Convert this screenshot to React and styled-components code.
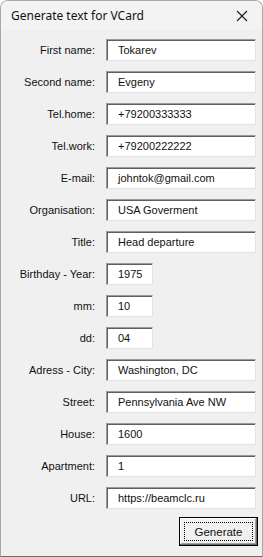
import styled, { createGlobalStyle } from "styled-components";

const fields = [
  { label: "First name:", value: "Tokarev" },
  { label: "Second name:", value: "Evgeny" },
  { label: "Tel.home:", value: "+79200333333" },
  { label: "Tel.work:", value: "+79200222222" },
  { label: "E-mail:", value: "johntok@gmail.com" },
  { label: "Organisation:", value: "USA Goverment" },
  { label: "Title:", value: "Head departure" },
  { label: "Birthday - Year:", value: "1975", short: true },
  { label: "mm:", value: "10", short: true },
  { label: "dd:", value: "04", short: true },
  { label: "Adress - City:", value: "Washington, DC" },
  { label: "Street:", value: "Pennsylvania Ave NW" },
  { label: "House:", value: "1600" },
  { label: "Apartment:", value: "1" },
  { label: "URL:", value: "https://beamclc.ru" },
];

function App() {
  return (
    <>
      <GlobalStyle />
      <Window>
        <TitleBar>
          <Title>Generate text for VCard</Title>
          <CloseButton aria-label="Close">
            <svg width="12" height="12" viewBox="0 0 12 12">
              <path d="M1 1L11 11M11 1L1 11" stroke="#1a1a1a" strokeWidth="1.1" fill="none" />
            </svg>
          </CloseButton>
        </TitleBar>
        <Body>
          <Form>
            {fields.map((f) => (
              <Row key={f.label}>
                <Label>{f.label}</Label>
                <Field $short={f.short}>{f.value}</Field>
              </Row>
            ))}
          </Form>
          <Footer>
            <GenerateButton>
              <FocusRing>Generate</FocusRing>
            </GenerateButton>
          </Footer>
        </Body>
      </Window>
    </>
  );
}

const GlobalStyle = createGlobalStyle`
  html, body {
    margin: 0;
    padding: 0;
    background: #ffffff;
  }
  * {
    box-sizing: border-box;
  }
`;

const Window = styled.div`
  width: 263px;
  height: 557px;
  display: flex;
  flex-direction: column;
  border: 1px solid #a8a8a8;
  border-bottom-color: #6e6e6e;
  border-radius: 8px 8px 0 0;
  overflow: hidden;
  font-family: "Liberation Sans", Arial, sans-serif;
`;

const TitleBar = styled.div`
  height: 29px;
  display: flex;
  align-items: center;
  justify-content: space-between;
  padding: 0 10px 0 10px;
  background: #f3f3f3;
`;

const Title = styled.span`
  font-family: "Noto Sans", "Open Sans", sans-serif;
  font-size: 12px;
  color: #111;
  margin-top: -1px;
`;

const CloseButton = styled.div`
  display: flex;
  align-items: center;
  justify-content: center;
  width: 16px;
  height: 16px;
  margin-right: 2px;
`;

const Body = styled.div`
  flex: 1;
  display: flex;
  flex-direction: column;
  background: #f0f0f0;
  padding-top: 9px;
`;

const Form = styled.div`
  display: flex;
  flex-direction: column;
  gap: 10px;
`;

const Row = styled.div`
  display: grid;
  grid-template-columns: 94px auto;
  column-gap: 11px;
  align-items: center;
  height: 22px;
`;

const Label = styled.span`
  text-align: right;
  font-size: 11px;
  color: #111;
  white-space: nowrap;
`;

const Field = styled.div`
  width: ${(p) => (p.$short ? "47px" : "150px")};
  height: 22px;
  display: flex;
  align-items: center;
  padding-left: 11px;
  background: #ffffff;
  border-top: 1px solid #9a9a9a;
  border-left: 1px solid #9a9a9a;
  border-right: 1px solid #e3e3e3;
  border-bottom: 1px solid #e3e3e3;
  box-shadow: inset 1px 1px 0 #5f5f5f;
  font-size: 11px;
  color: #111;
  white-space: nowrap;
  overflow: hidden;
`;

const Footer = styled.div`
  display: flex;
  justify-content: flex-end;
  padding: 8px 4px 0 0;
`;

const GenerateButton = styled.div`
  width: 79px;
  height: 29px;
  padding: 4px;
  border: 1px solid #000;
  background: #f0f0f0;
  box-shadow: inset -1px -1px 0 #696969, inset 1px 1px 0 #ffffff,
    inset -2px -2px 0 #a0a0a0;
`;

const FocusRing = styled.div`
  height: 100%;
  display: flex;
  align-items: center;
  justify-content: center;
  border: 1px dotted #000;
  font-size: 11.5px;
  color: #111;
`;

export default App;
